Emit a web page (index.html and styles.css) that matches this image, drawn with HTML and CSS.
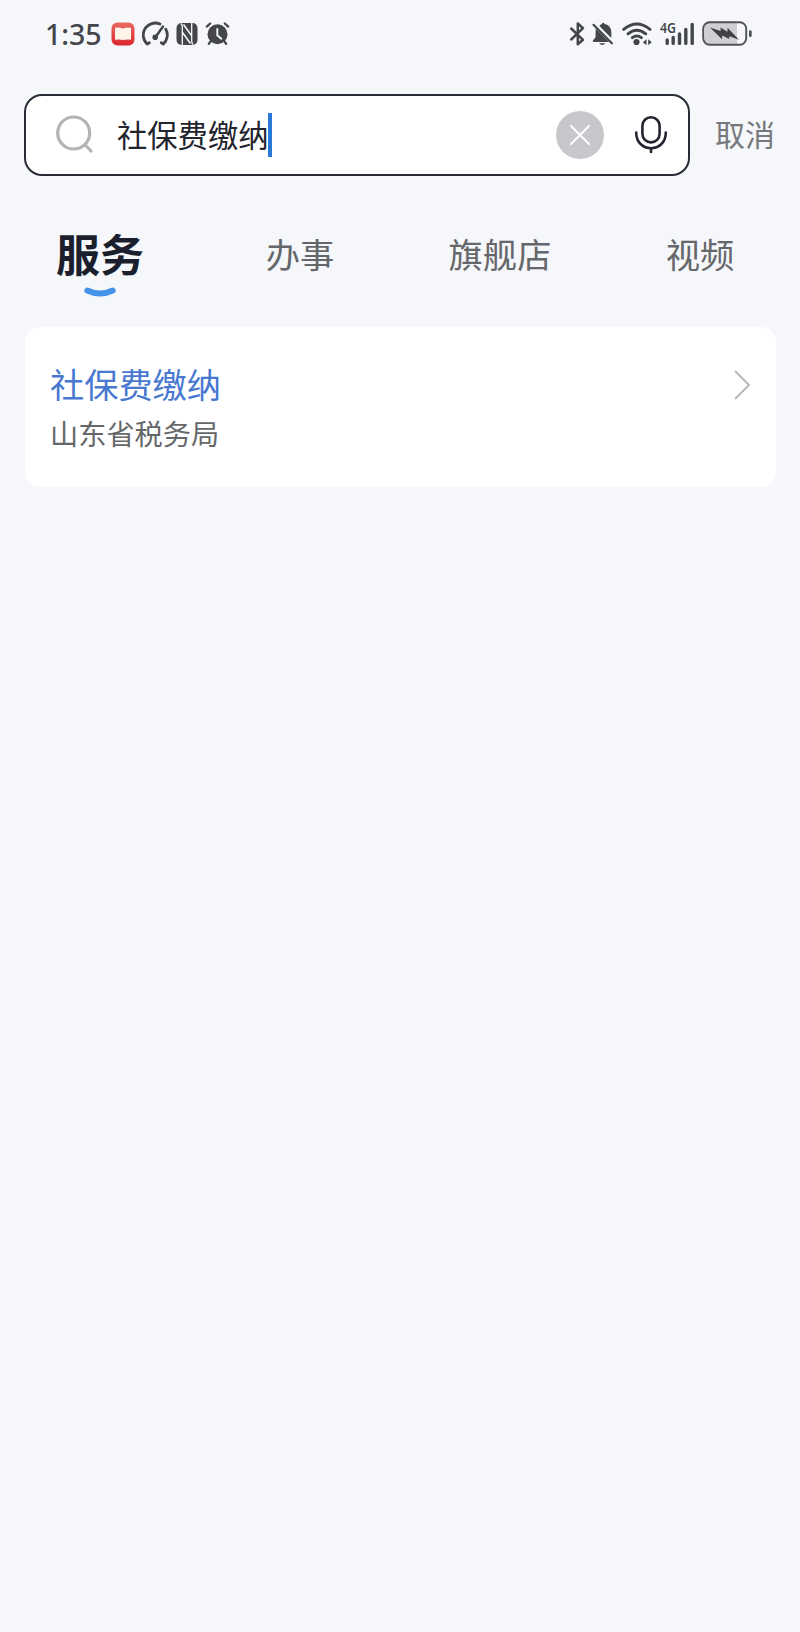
FILE: index.html
```html
<!DOCTYPE html>
<html lang="zh-CN">
<head>
  <meta charset="UTF-8">
  <title>搜索</title>
  <link rel="stylesheet" href="styles.css">
</head>
<body>
<div class="status">
  <span class="time">1:35</span>
  <div class="status_left">
    <svg width="24" height="28" viewBox="0 0 24 28">
      <defs>
        <linearGradient id="red" x1="0" y1="0" x2="0" y2="1">
          <stop offset="0" stop-color="#ea6a60"/>
          <stop offset="1" stop-color="#dc2430"/>
        </linearGradient>
      </defs>
      <rect x="0.5" y="2.5" width="23" height="23" rx="6" fill="url(#red)"/>
      <path d="M4 7.800q4-1 8 .8q4-1.800 8-.8v11.900q-4-.6-8 .3q-4-.9-8-.3z" fill="#fff3ea"/>
    </svg>
    <svg width="27" height="28" viewBox="0 0 27 28" fill="none" stroke="#44464b" stroke-width="2.800" stroke-linecap="round">
      <path d="M7.300 22.800L5.300 24A12 12 0 0 1 18 4M23.800 9.200A12 12 0 0 1 21.300 24L19.300 22.800"/>
      <path d="M13.600 17L21 6.500" stroke-width="2.500"/>
      <circle cx="13.200" cy="17.300" r="1.800" fill="#44464b" stroke-width="2"/>
    </svg>
    <svg width="22" height="28" viewBox="0 0 22 28">
      <rect x="0.500" y="3" width="21" height="22" rx="5" fill="#44464b"/>
      <path d="M5 3.500Q6.300 5 6.300 7V25M17 24.500Q15.700 23 15.700 21V3" stroke="#f5f7fb" stroke-width="1.300" fill="none"/>
      <path d="M7.500 4.500L15.500 15.500M6.500 12.500L14.500 23.500" stroke="#f5f7fb" stroke-width="1.500" fill="none"/>
    </svg>
    <svg width="25" height="28" viewBox="0 0 25 28" fill="none" stroke="#44464b" stroke-width="2.300" stroke-linecap="round">
      <circle cx="12.500" cy="14.300" r="10" fill="#44464b" stroke="none"/>
      <path d="M1.800 6.600L5.200 3.500M19.800 3.500L23.200 6.600M5.500 21.500L3.800 23.900M19.500 21.500L21.200 23.900"/>
      <path d="M12.300 9v6.200l4 3.500" stroke="#f5f7fb" stroke-width="1.900"/>
    </svg>
  </div>
  <div class="status_right">
    <svg class="bt" width="17" height="28" viewBox="0 0 17 28" fill="none" stroke="#44464b" stroke-width="2.500" stroke-linejoin="round" stroke-linecap="round">
      <path d="M2.200 8.500L14 19.800L8.800 24.200V3.500L14 8.200L2.200 19.500"/>
    </svg>
    <svg class="bell" width="22" height="28" viewBox="0 0 22 28">
      <path d="M3.700 8.500L17 22H1.500q-1.300-.5-.5-1.800l2.500-3zM7.300 6Q8.500 4.300 9.800 4Q11 1.600 12.800 3.900Q19 5.600 19.300 11.500V18z" fill="#44464b"/>
      <path d="M7 23.200h6.500q-3.200 3.600-6.500 0z" fill="#44464b"/>
      <path d="M1.500 4.800L19.800 23.300" stroke="#44464b" stroke-width="2.200" stroke-linecap="round"/>
    </svg>
    <svg class="wifi" width="31" height="28" viewBox="0 0 31 28" fill="none" stroke="#44464b" stroke-width="2.900" stroke-linecap="round">
      <path d="M1.700 9.400Q14.800-1.200 28 9.400M6 13.800Q14.800 6.500 23.700 13.800M10.300 17.700Q14.800 14.200 19.300 17.700"/>
      <circle cx="14.500" cy="22" r="3.100" fill="#44464b" stroke="none"/>
      <path d="M24.500 19.300v6l-3.600-3zM26.200 19.300v6l3.600-3z" fill="#44464b" stroke="none"/>
    </svg>
    <svg class="signal" width="38" height="36" viewBox="0 -4 38 36">
      <g stroke="#44464b" stroke-width="3.400" stroke-linecap="round">
        <path d="M9.200 20v3.400M15.200 17.500v5.900M21.500 14v9.400M27.800 9.500v13.900M34.200 4.500v18.900"/>
      </g>
      <text class="net" x="2" y="13.300" textLength="16" lengthAdjust="spacingAndGlyphs">4G</text>
    </svg>
    <svg class="battery" width="51" height="28" viewBox="0 0 51 28">
      <path d="M8 2.500h27v22H8q-5.500 0-5.500-5.500V8Q2.500 2.500 8 2.500z" fill="#cfd0d3"/>
      <rect x="1.200" y="2.200" width="43" height="22.600" rx="6.500" fill="none" stroke="#505257" stroke-width="1.900"/>
      <path d="M8 7.500L18.500 11L18.700 7.600L25.400 11.800L25.600 7.700L37 19.700L27.500 16.200L27.200 19L20.300 15.600L20 19.200z" fill="#3f4146"/>
      <rect x="47" y="10.200" width="2.700" height="6.800" rx="1.300" fill="#505257"/>
    </svg>
  </div>
</div>

<div class="search">
  <div class="search_box">
    <svg class="icon_search" width="38" height="40" viewBox="0 0 38 40" fill="none" stroke="#b3b4b6" stroke-width="3.200" stroke-linecap="round">
      <circle cx="17.700" cy="18" r="16"/>
      <path d="M29.300 30L35 36"/>
    </svg>
    <span class="keyword">社保费缴纳</span>
    <span class="cursor"></span>
    <svg class="icon_clear" width="48" height="48" viewBox="0 0 48 48">
      <circle cx="24" cy="24" r="24" fill="#c7c8cc"/>
      <path d="M15 15L33 33M33 15L15 33" stroke="#fff" stroke-width="2" stroke-linecap="round"/>
    </svg>
    <svg class="icon_mic" width="34" height="40" viewBox="0 0 34 40" fill="none" stroke="#22252f" stroke-width="2.600" stroke-linecap="round">
      <rect x="8.400" y="2.200" width="17.200" height="25.200" rx="8.600"/>
      <path d="M2.200 17.500C2.200 38.500 31.800 38.500 31.800 17.500M17 33.500v3.500"/>
    </svg>
  </div>
  <span class="cancel">取消</span>
</div>

<div class="tabs">
  <div class="tab active">服务
    <svg class="smile" width="32" height="12" viewBox="0 0 32 12">
      <path d="M3.200 3.500Q16 9.500 28.800 3.500" fill="none" stroke="#4592ea" stroke-width="5.800" stroke-linecap="round"/>
    </svg>
  </div>
  <div class="tab">办事</div>
  <div class="tab">旗舰店</div>
  <div class="tab">视频</div>
</div>

<div class="card">
  <div>
    <div class="card_title">社保费缴纳</div>
    <div class="card_sub">山东省税务局</div>
  </div>
  <svg class="arrow" width="18" height="32" viewBox="0 0 18 32">
    <path d="M2 2L16 16L2 30" fill="none" stroke="#b6b7b9" stroke-width="1.900"/>
  </svg>
</div>
</body>
</html>
```
FILE: styles.css
```css
body {
  margin: 0;
  width: 800px;
  min-height: 1632px;
  background: #f5f7fb;
  font-family: "Noto Sans CJK SC", sans-serif;
}
svg {
  display: block;
  flex: none;
}
.status {
  display: flex;
  align-items: center;
  height: 68px;
  padding: 0 47px 0 45px;
}
.time {
  width: 66px;
  font-family: "Noto Sans", sans-serif;
  font-size: 28.500px;
  font-weight: 500;
  line-height: 40px;
  color: #44464b;
}
.status_left {
  display: flex;
  gap: 7px;
}
.status_right {
  display: flex;
  align-items: center;
  margin-left: auto;
}
.bell {
  margin-left: 6px;
}
.wifi {
  margin-left: 8px;
}
.signal {
  margin-left: 5px;
}
.battery {
  margin-left: 6px;
}
.net {
  font-family: "Noto Sans", sans-serif;
  font-size: 15px;
  font-weight: 600;
  fill: #44464b;
}
.search {
  display: flex;
  align-items: center;
  margin-top: 26px;
  padding-left: 24px;
}
.search_box {
  box-sizing: border-box;
  display: flex;
  align-items: center;
  width: 666px;
  height: 82px;
  padding: 0 20px 0 30px;
  border: 2px solid #292b36;
  border-radius: 18px;
  background: #fff;
}
.keyword {
  margin-left: 23px;
  padding-bottom: 3px;
  font-size: 30.3px;
  line-height: 44px;
  color: #22242e;
}
.cursor {
  width: 4px;
  height: 44px;
  background: #2a78d8;
}
.icon_clear {
  margin-left: auto;
}
.icon_mic {
  margin-left: 30px;
}
.cancel {
  margin-left: 25px;
  padding-bottom: 4px;
  font-size: 30px;
  line-height: 44px;
  color: #77787c;
}
.tabs {
  display: grid;
  grid-template-columns: repeat(4, 200px);
  align-items: center;
  height: 76px;
  margin-top: 39px;
}
.tab {
  position: relative;
  text-align: center;
  font-size: 34.300px;
  line-height: 50px;
  color: #66676a;
}
.active {
  font-size: 44px;
  font-weight: bold;
  color: #1b1f2d;
}
/* curve below the selected tab */
.smile {
  position: absolute;
  left: 84px;
  top: 59px;
}
.card {
  display: flex;
  justify-content: space-between;
  align-items: flex-start;
  box-sizing: border-box;
  height: 160px;
  margin: 36px 24px 0 25px;
  padding: 31px 25px 0;
  border-radius: 15px;
  background: #fff;
}
.card_title {
  font-size: 34.200px;
  line-height: 50px;
  color: #4878d0;
}
.card_sub {
  font-size: 28.200px;
  line-height: 50px;
  color: #666769;
}
.arrow {
  margin-top: 11px;
}
```
